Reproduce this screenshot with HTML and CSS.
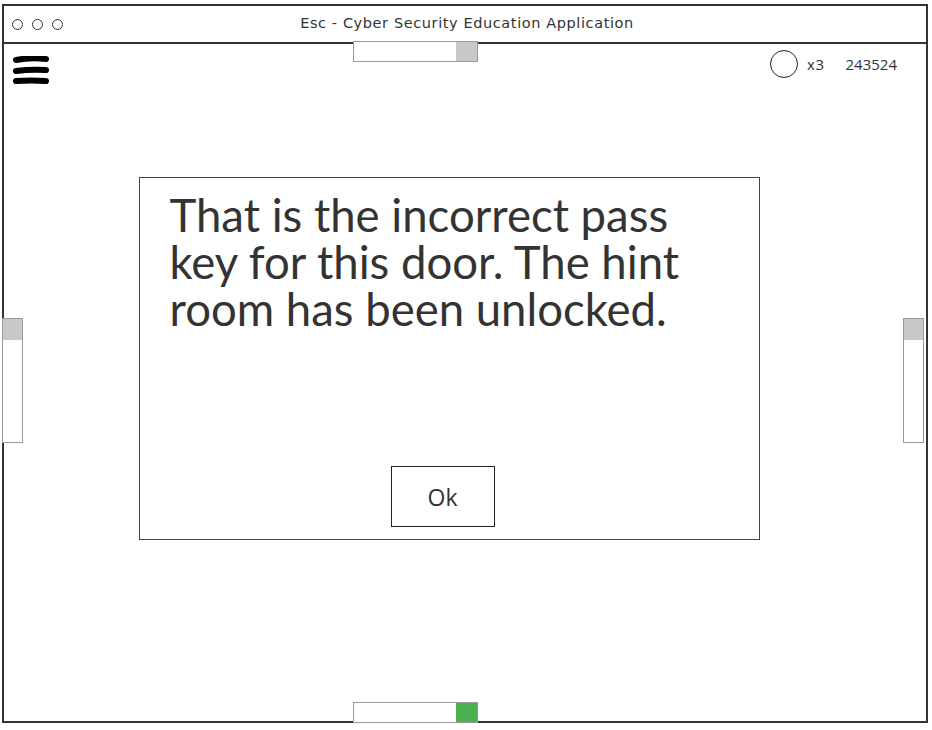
FILE: index.html
```html
<!DOCTYPE html>
<html>
<head>
<meta charset="utf-8">
<link rel="stylesheet" href="styles.css">
</head>
<body>
<div class="window">
  <div class="titlebar">
    <div class="dots"><span class="dot"></span><span class="dot"></span><span class="dot"></span></div>
    <div class="title">Esc - Cyber Security Education Application</div>
  </div>
  <div class="content">
    <div class="toprow">
      <svg class="burger" width="36" height="30" viewBox="0 0 36 30">
        <path d="M3 4 Q18 1 33 3" stroke="#000" stroke-width="6" stroke-linecap="round" fill="none"/>
        <path d="M3 15 Q18 13 33 14" stroke="#000" stroke-width="6" stroke-linecap="round" fill="none"/>
        <path d="M3 25 Q18 24 33 25" stroke="#000" stroke-width="6" stroke-linecap="round" fill="none"/>
      </svg>
      <div class="stats">
        <span class="ring"></span>
        <span class="lives">x3</span>
        <span class="score">243524</span>
      </div>
    </div>
    <div class="stage">
      <div class="dialog">
        <p class="message">That is the incorrect pass key for this door. The hint room has been unlocked.</p>
        <button class="ok">Ok</button>
      </div>
    </div>
  </div>
  <div class="scroll h top"><span class="thumb gray"></span></div>
  <div class="scroll h bottom"><span class="thumb green"></span></div>
  <div class="scroll v left"><span class="thumb gray"></span></div>
  <div class="scroll v right"><span class="thumb gray"></span></div>
</div>
</body>
</html>
```
FILE: styles.css
```css
* { box-sizing: border-box; }
html, body { margin: 0; padding: 0; background: #fff; }
body { width: 932px; height: 730px; overflow: hidden; font-family: "Open Sans", sans-serif; }
.window {
  position: relative;
  margin: 4px 0 0 2px;
  width: 926px;
  height: 719px;
  border: 2px solid #333;
  display: flex;
  flex-direction: column;
}
.titlebar {
  height: 38px;
  border-bottom: 2px solid #333;
  display: flex;
  align-items: center;
  position: relative;
}
.dots { display: flex; gap: 9px; padding-left: 8px; }
.dot { width: 11px; height: 11px; border: 1.6px solid #333; border-radius: 50%; }
.title {
  position: absolute; left: 0; right: 0; text-align: center;
  font-family: "DejaVu Sans", sans-serif; font-size: 14.5px; color: #333;
  letter-spacing: 0.6px; padding-left: 4px; padding-bottom: 2px;
}
.content { flex: 1; display: flex; flex-direction: column; }
.toprow {
  display: flex; justify-content: space-between; align-items: flex-start;
  padding: 9px 29px 0 9px; height: 48px;
}
.burger { display: block; margin-top: 3px; }
.stats { display: flex; align-items: center; font-family: "Open Sans", sans-serif; font-size: 15px; color: #333; margin-top: -3px; }
.ring { width: 28px; height: 28px; border: 1.6px solid #222; border-radius: 50%; margin-right: 9px; }
.lives { margin-right: 21px; letter-spacing: 0.5px; }
.stage { flex: 1; display: flex; justify-content: center; padding-top: 85px; padding-right: 32px; }
.dialog {
  width: 621px; height: 363px;
  border: 1.5px solid #444;
  display: flex; flex-direction: column; align-items: center;
  padding: 13px 20px 12px 30px;
}
.message {
  margin: 0; align-self: stretch;
  font-family: "Lato", sans-serif; font-size: 45.5px; line-height: 47px; color: #333;
}
.ok {
  margin-top: auto; margin-right: 23px;
  width: 104px; height: 61px;
  background: #fff; border: 1.5px solid #222;
  font-family: "Open Sans", sans-serif; font-size: 23px; color: #333;
}
.scroll { position: absolute; border: 1.5px solid #999; background: #fff; display: flex; }
.scroll.h { width: 125px; height: 21px; left: 349px; justify-content: flex-end; }
.scroll.top { top: 35px; }
.scroll.bottom { bottom: -2px; }
.scroll.v { width: 21px; height: 125px; top: 312px; flex-direction: column; }
.scroll.left { left: -2px; }
.scroll.right { right: 2px; }
.thumb { display: block; }
.scroll.h .thumb { width: 21px; height: 100%; }
.scroll.v .thumb { height: 21px; width: 100%; }
.gray { background: #c8c8c8; }
.green { background: #4caf50; }
```
